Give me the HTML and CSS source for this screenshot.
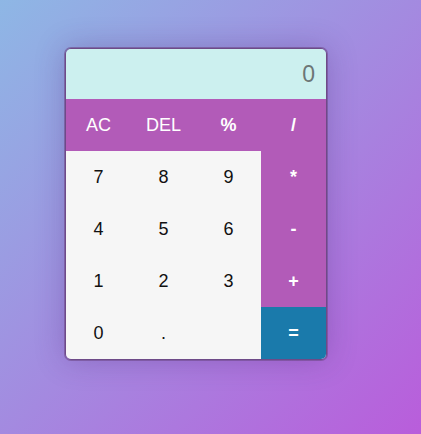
FILE: index.html
```html
<!DOCTYPE html>
<html>
<head>
<meta charset="utf-8">
<link rel="stylesheet" href="styles.css">
</head>
<body>
<div class="page">
  <div class="calc">
    <div class="display">0</div>
    <div class="keys">
      <button class="key op">AC</button>
      <button class="key op">DEL</button>
      <button class="key op sym">%</button>
      <button class="key op sym">/</button>
      <button class="key">7</button>
      <button class="key">8</button>
      <button class="key">9</button>
      <button class="key op sym">*</button>
      <button class="key">4</button>
      <button class="key">5</button>
      <button class="key">6</button>
      <button class="key op sym">-</button>
      <button class="key">1</button>
      <button class="key">2</button>
      <button class="key">3</button>
      <button class="key op sym">+</button>
      <button class="key">0</button>
      <button class="key">.</button>
      <span class="key blank"></span>
      <button class="key eq sym">=</button>
    </div>
  </div>
</div>
</body>
</html>
```

FILE: styles.css
```css
html, body {
  margin: 0;
  height: 100%;
}
body {
  background: linear-gradient(to bottom right, #8eb7e5, #b95ddb);
  font-family: "Liberation Sans", Arial, sans-serif;
}
.page {
  padding: 48px 0 0 65px;
}
.calc {
  width: 260px;
  border: 1px solid #6e4a88;
  border-radius: 6px;
  overflow: hidden;
  box-shadow: 0 0 0 1px rgba(110, 74, 136, 0.6), 0 0 30px rgba(70, 30, 110, 0.28);
}
.display {
  height: 50px;
  background: #ccf0ef;
  color: #6c7676;
  font-size: 23px;
  display: flex;
  align-items: center;
  justify-content: flex-end;
  padding-right: 11px;
}
.keys {
  display: grid;
  grid-template-columns: repeat(4, 65px);
  grid-auto-rows: 52px;
  background: #f6f6f6;
}
.key {
  border: none;
  margin: 0;
  padding: 0;
  background: transparent;
  font-family: "Liberation Sans", Arial, sans-serif;
  font-size: 18px;
  color: #111;
  display: flex;
  align-items: center;
  justify-content: center;
}
.op {
  background: #b25bb8;
  color: #fff;
}
.sym {
  font-weight: bold;
}
.eq {
  background: #1a7aab;
  color: #fff;
}
```
